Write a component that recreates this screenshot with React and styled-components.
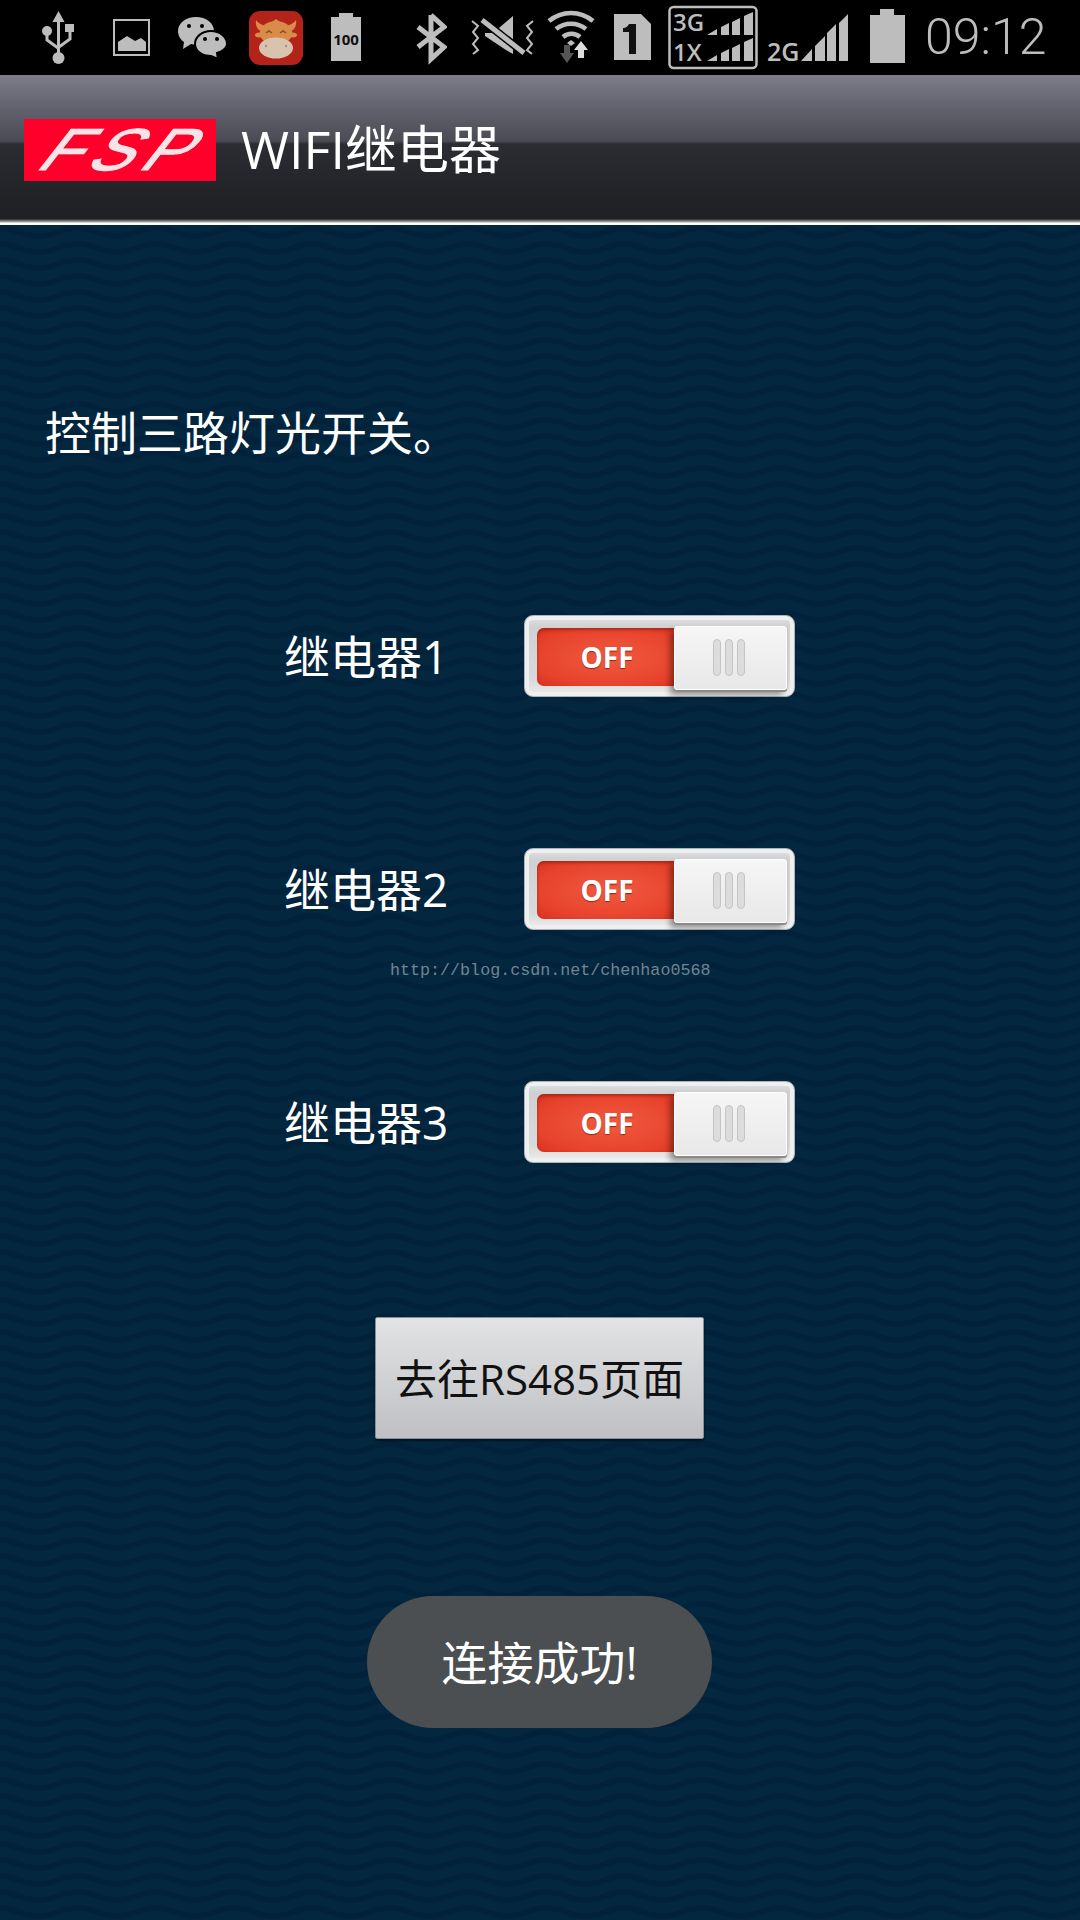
import React from 'react';
import styled, { createGlobalStyle } from 'styled-components';

const wave = encodeURIComponent(
  `<svg xmlns="http://www.w3.org/2000/svg" width="78" height="16"><path d="M0 4C19.500 4 19.500 12 39 12S58.500 4 78 4" fill="none" stroke="#02213a" stroke-width="6"/></svg>`
);

const Global = createGlobalStyle`
  html, body { margin: 0; padding: 0; background: #03263f; }
  body { font-family: "Open Sans", "Noto Sans CJK SC", sans-serif; }
`;

const Screen = styled.div`
  position: relative;
  width: 1080px;
  height: 1920px;
  overflow: hidden;
  display: flex;
  flex-direction: column;
  background-color: #03273f;
  background-image: url("data:image/svg+xml,${wave}");
`;

const StatusBar = styled.div`
  height: 75px;
  flex: none;
  background: #000;
  display: flex;
  align-items: flex-start;
  color: #bdbdbd;
`;

const StatusIcon = styled.svg`
  flex: none;
  height: 75px;
  margin-left: ${(p) => p.$left}px;
  display: block;
`;

const Clock = styled.span`
  margin-left: 20px;
  font-family: Roboto, sans-serif;
  font-weight: 300;
  font-size: 50px;
  line-height: 75px;
`;

const TitleBar = styled.header`
  height: 150px;
  flex: none;
  box-sizing: border-box;
  padding: 44px 0 0 24px;
  display: flex;
  align-items: flex-start;
  gap: 25px;
  background: linear-gradient(
    #7c7d89 0,
    #666772 27px,
    #4a4b55 66px,
    #2c2d33 69px,
    #222327 120px,
    #1f2024 144px,
    #555 145px,
    #aaa 147px,
    #fff 148px,
    #fff 150px
  );
`;

const Logo = styled.svg`
  display: block;
  width: 192px;
  height: 62px;
  flex: none;
`;

const Title = styled.h1`
  margin: 0;
  font-size: 52px;
  line-height: 60px;
  font-weight: 400;
  color: #fff;
`;

const Content = styled.main`
  display: flex;
  flex-direction: column;
  align-items: flex-start;
`;

const Intro = styled.p`
  margin: 175px 0 0 45px;
  font-size: 46px;
  line-height: 64px;
  color: #fff;
`;

const Rows = styled.div`
  margin-top: 150px;
  display: flex;
  flex-direction: column;
  gap: 150px;
`;

const Row = styled.div`
  display: flex;
  align-items: center;
  height: 83px;
  padding-left: 284px;
`;

const RowLabel = styled.span`
  width: 240px;
  padding-bottom: 4px;
  font-size: 46px;
  color: #fff;
`;

const Toggle = styled.div`
  position: relative;
  box-sizing: border-box;
  width: 271px;
  height: 82px;
  padding: 12px;
  border-radius: 9px;
  background: linear-gradient(#e0e1e2, #cfd0d1 14%, #d8d9da 80%, #eeeeee);
  border: 1px solid #aeb3b8;
  box-shadow: inset 0 0 0 4px #efefef;
`;

const RedPart = styled.div`
  width: 150px;
  height: 58px;
  border-radius: 7px;
  background: radial-gradient(ellipse at center, #ef5a40 0%, #e8432c 70%, #d8321f 100%);
  box-shadow: inset 0 2px 3px rgba(120, 20, 10, 0.5);
  display: flex;
  align-items: center;
  justify-content: center;
  padding-right: 10px;
  box-sizing: border-box;
  font-family: "Open Sans", sans-serif;
  font-weight: 700;
  font-size: 28px;
  color: #fff;
  text-shadow: 0 1px 1px rgba(110, 20, 10, 0.7);
`;

const Knob = styled.div`
  position: absolute;
  top: 10px;
  left: 149px;
  width: 113px;
  height: 64px;
  box-sizing: border-box;
  border-radius: 3px;
  background: linear-gradient(#f6f6f6, #e8e8e8);
  border: 1px solid #fff;
  box-shadow: 0 2px 0 #8a8a8a, 1px 0 0 #c8c8c8, -4px 5px 6px rgba(0, 0, 0, 0.4);
  display: flex;
  align-items: center;
  justify-content: center;
  gap: 4px;
  padding-right: 4px;
`;

const Grip = styled.span`
  width: 8px;
  height: 37px;
  box-sizing: border-box;
  border-radius: 4px;
  background: #dcdcdc;
  border: 1px solid #c4c4c4;
`;

const GoButton = styled.button`
  align-self: flex-start;
  margin: 154px 0 0 375px;
  width: 329px;
  height: 122px;
  padding: 0 0 4px;
  border: 1px solid #8b8f93;
  border-radius: 2px;
  background: linear-gradient(#e2e3e5, #bfc0c3);
  box-shadow: 0 2px 2px rgba(0, 0, 0, 0.5);
  font-family: "Open Sans", "Noto Sans CJK SC", sans-serif;
  font-size: 42px;
  color: #111;
`;

const Toast = styled.div`
  position: absolute;
  left: 367px;
  top: 1596px;
  width: 345px;
  height: 132px;
  box-sizing: border-box;
  padding-bottom: 4px;
  border-radius: 66px;
  background: #4c4f51;
  display: flex;
  align-items: center;
  justify-content: center;
  font-size: 46px;
  color: #fff;
`;

const Watermark = styled.div`
  position: absolute;
  left: 390px;
  top: 960px;
  font-family: "Liberation Mono", "Noto Sans CJK SC", monospace;
  font-size: 16.700px;
  line-height: 22px;
  color: #6f8594;
`;

const G = '#bdbdbd';
const iconText = { fontFamily: '"Open Sans", sans-serif', fontWeight: 600, fill: G };

function StatusIcons() {
  return (
    <>
      {/* usb */}
      <StatusIcon $left={42} width={32} viewBox="0 0 32 75">
        <path d="M15 22h3v38h-3z" fill={G} />
        <path d="M16.500 11l6 11h-12z" fill={G} />
        <circle cx="16.500" cy="58" r="6" fill={G} />
        <circle cx="5" cy="31" r="5" fill={G} />
        <path d="M5 34v6l11 8M28 32v7l-11 8" stroke={G} strokeWidth="3" fill="none" />
        <path d="M23 24h9v8h-9z" fill={G} />
      </StatusIcon>
      {/* picture */}
      <StatusIcon $left={39} width={37} viewBox="0 0 37 75">
        <path d="M1 20h35v35H1z" fill="none" stroke={G} strokeWidth="2" />
        <path d="M5 51V42l9-6 8 5 6-3 5 4v9z" fill={G} />
      </StatusIcon>
      {/* wechat */}
      <StatusIcon $left={28} width={49} viewBox="0 0 49 75">
        <path d="M18 17c-10 0-18 6-18 14 0 5 3 9 6 11l-1 7 8-5 5 1c10 0 18-6 18-14s-8-14-18-14z" fill={G} />
        <path d="M33 31c-9 0-16 6-16 13s7 12 16 12l7 3-1-6c6-2 10-5 10-9 0-7-7-13-16-13z" fill={G} stroke="#000" strokeWidth="2" />
        <circle cx="11" cy="26" r="2" fill="#000" />
        <circle cx="24" cy="26" r="2" fill="#000" />
        <circle cx="27" cy="39" r="2" fill="#000" />
        <circle cx="39" cy="39" r="2" fill="#000" />
      </StatusIcon>
      {/* app icon, cow head */}
      <StatusIcon $left={22} width={54} viewBox="0 0 54 75">
        <rect x="0" y="11" width="54" height="54" rx="11" fill="#b4231a" />
        <path d="M7 20c-1 6 2 11 7 12l3 2 3-8c-5 0-10-2-13-6zM47 20c1 6-2 11-7 12l-3 2-3-8c5 0 10-2 13-6z" fill="#d98b4a" />
        <ellipse cx="27" cy="33" rx="16" ry="12" fill="#d98b4a" />
        <ellipse cx="11" cy="35" rx="5" ry="2.500" fill="#d98b4a" />
        <ellipse cx="43" cy="35" rx="5" ry="2.500" fill="#d98b4a" />
        <path d="M23 22l4-3 4 3z" fill="#d98b4a" />
        <ellipse cx="27" cy="48" rx="17" ry="10.500" fill="#d8c4ae" />
        <path d="M17 33l3-2 3 2M31 33l3-2 3 2" stroke="#8a4a20" strokeWidth="1.500" fill="none" />
        <circle cx="17" cy="46" r="1.200" fill="#a89" />
        <circle cx="37" cy="46" r="1.200" fill="#a89" />
      </StatusIcon>
      {/* battery 100 */}
      <StatusIcon $left={28} width={30} viewBox="0 0 30 75">
        <path d="M8 13h14v4h8v44H0V17h8z" fill={G} />
        <text x="15" y="45" textAnchor="middle" fontSize="15" style={{ ...iconText, fontWeight: 700, fill: '#111' }}>100</text>
      </StatusIcon>
      {/* bluetooth */}
      <StatusIcon $left={54} width={32} viewBox="0 0 32 75">
        <path d="M16 15v44l13-12L3 27m13-12l13 12L3 47" fill="none" stroke={G} strokeWidth="5" />
      </StatusIcon>
      {/* muted vibrate */}
      <StatusIcon $left={22} width={67} viewBox="0 0 67 75">
        <path d="M16 33h8l20-17v38L37 50l-21-14z" fill={G} />
        <path d="M13 20l42 33" stroke="#000" strokeWidth="8" />
        <path d="M13 20l42 33" stroke={G} strokeWidth="5" />
        <path d="M3 21l6 5-5 6 5 6-5 6 5 6-5 4M64 21l-6 5 5 6-5 6 5 6-5 6 5 4" fill="none" stroke={G} strokeWidth="2" />
      </StatusIcon>
      {/* wifi */}
      <StatusIcon $left={11} width={50} viewBox="0 0 50 75">
        <path d="M2 21a34 34 0 0 1 44 0M9 29a24 24 0 0 1 30 0M16 37a13 13 0 0 1 17 0" fill="none" stroke={G} strokeWidth="4.500" />
        <path d="M20 43l4-3 4 3-4 3z" fill={G} />
        <path d="M34 41l7 9h-4v8h-6v-8h-4z" fill="#ddd" />
        <path d="M17 45h6v8h4l-7 10-7-10h4z" fill="#555" />
      </StatusIcon>
      {/* sim 1 */}
      <StatusIcon $left={17} width={37} viewBox="0 0 37 75">
        <path d="M0 14h27l10 10v36H0z" fill={G} />
        <path d="M15 24h7v30h-7V32h-6v-4c3 0 5-2 6-4z" fill="#111" />
      </StatusIcon>
      {/* 3G 1X dual signal */}
      <StatusIcon $left={17} width={90} viewBox="0 0 90 75">
        <rect x="1.500" y="7" width="87" height="61" rx="4" fill="none" stroke={G} strokeWidth="2.500" />
        <text x="5" y="31" fontSize="24" style={iconText}>3G</text>
        <text x="5" y="61" fontSize="24" style={iconText}>1X</text>
        <path d="M39 35l10-6v6zM53 35v-8l8-4v12zM64 35V22l8-4v17zM76 35V16l9-4v23z" fill={G} />
        <path d="M39 61l10-6v6zM53 61v-8l8-4v12zM64 61V48l8-4v17zM76 61V42l9-4v23z" fill={G} />
      </StatusIcon>
      {/* 2G signal */}
      <StatusIcon $left={9} width={81} viewBox="0 0 81 75">
        <text x="0" y="61" fontSize="25" style={iconText}>2G</text>
        <path d="M34 61l11-12v12zM48 61V46l10-10v25zM60 61V33l9-9v37zM72 61V23l9-9v47z" fill={G} />
      </StatusIcon>
      {/* battery */}
      <StatusIcon $left={22} width={35} viewBox="0 0 35 75">
        <path d="M10 9h14v6h11v48H0V15h10z" fill={G} />
      </StatusIcon>
    </>
  );
}

function RelaySwitch() {
  return (
    <Toggle>
      <RedPart>OFF</RedPart>
      <Knob>
        <Grip />
        <Grip />
        <Grip />
      </Knob>
    </Toggle>
  );
}

export default function App() {
  const relays = ['继电器1', '继电器2', '继电器3'];

  return (
    <Screen>
      <Global />
      <StatusBar>
        <StatusIcons />
        <Clock>09:12</Clock>
      </StatusBar>
      <TitleBar>
        <Logo viewBox="0 0 192 62">
          <rect width="192" height="62" fill="#ff002b" />
          <text
            transform="translate(10 51) skewX(-38) scale(1.120 1)"
            fontFamily='"Liberation Sans", sans-serif'
            fontSize="59"
            letterSpacing="8"
            fill="#f6e4e6"
            stroke="#f6e4e6"
            strokeWidth="1.200"
          >
            FSP
          </text>
        </Logo>
        <Title>WIFI继电器</Title>
      </TitleBar>
      <Content>
        <Intro>控制三路灯光开关。</Intro>
        <Rows>
          {relays.map((name) => (
            <Row key={name}>
              <RowLabel>{name}</RowLabel>
              <RelaySwitch />
            </Row>
          ))}
        </Rows>
        <GoButton>去往RS485页面</GoButton>
      </Content>
      <Watermark>http://blog.csdn.net/chenhao0568</Watermark>
      <Toast>连接成功!</Toast>
    </Screen>
  );
}
